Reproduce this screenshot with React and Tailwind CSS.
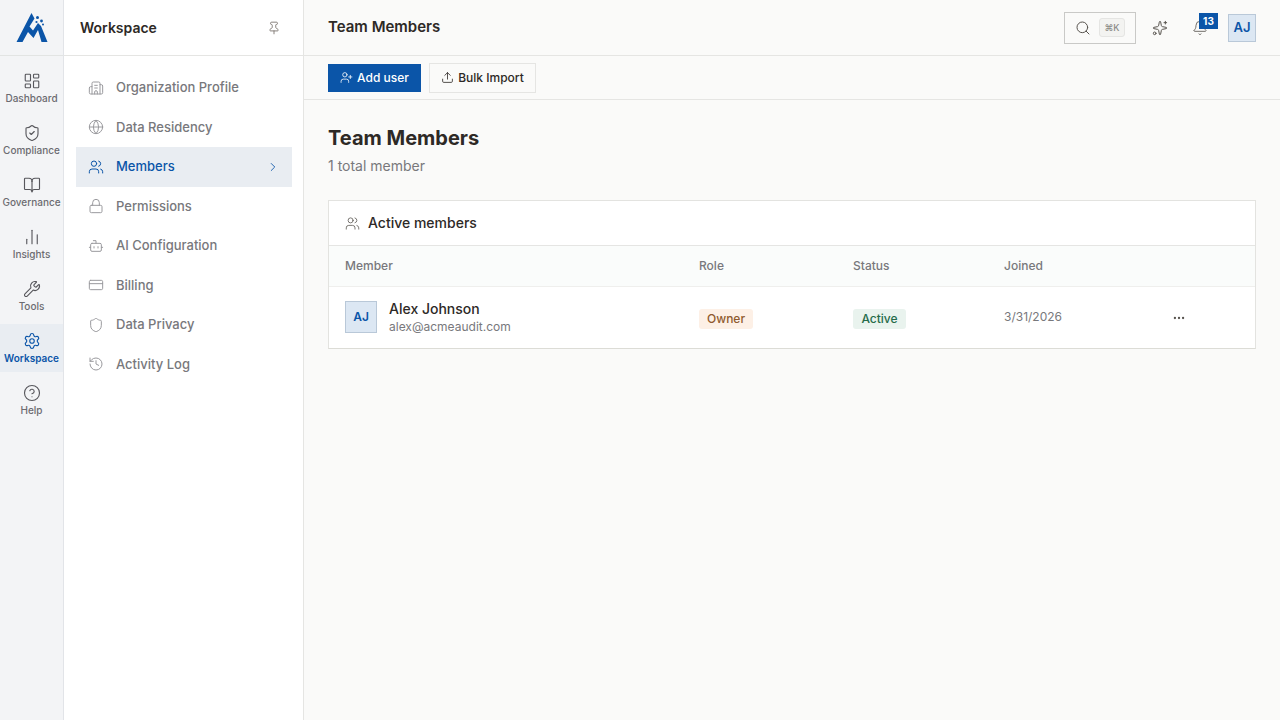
import {
  LayoutDashboard, ShieldCheck, BookOpen, ChartNoAxesColumn, Wrench, Settings, CircleHelp,
  Building2, Globe, Users, Lock, Bot, CreditCard, Shield, History, Pin, ChevronRight,
  Search, Sparkles, Bell, UserPlus, Upload, Ellipsis,
} from 'lucide-react'

const railItems = [
  { label: 'Dashboard', icon: LayoutDashboard },
  { label: 'Compliance', icon: ShieldCheck },
  { label: 'Governance', icon: BookOpen },
  { label: 'Insights', icon: ChartNoAxesColumn },
  { label: 'Tools', icon: Wrench },
  { label: 'Workspace', icon: Settings, active: true },
  { label: 'Help', icon: CircleHelp },
]

const navItems = [
  { label: 'Organization Profile', icon: Building2 },
  { label: 'Data Residency', icon: Globe },
  { label: 'Members', icon: Users, active: true },
  { label: 'Permissions', icon: Lock },
  { label: 'AI Configuration', icon: Bot },
  { label: 'Billing', icon: CreditCard },
  { label: 'Data Privacy', icon: Shield },
  { label: 'Activity Log', icon: History },
]

function Logo() {
  return (
    <svg width="32" height="32" viewBox="0 0 32 32" fill="none">
      <path d="M15.5 1 L0.5 30 H6.5 L12 20 L17.5 26 L22 18 L25.5 30 H31.5 L25 14 L22 11 L17 18.5 L13.5 14.5 L18.5 6.5 Z" fill="#0b55a8" />
      <circle cx="21.5" cy="5.5" r="1.5" fill="#0b55a8" />
      <circle cx="25.5" cy="9" r="1.4" fill="#0b55a8" />
      <circle cx="20.5" cy="10" r="1.1" fill="#0b55a8" />
      <circle cx="27" cy="12.5" r="1" fill="#0b55a8" />
    </svg>
  )
}

function Rail() {
  return (
    <div className="w-16 shrink-0 flex flex-col bg-[#f3f4f6] border-r border-[#e2e4e8]">
      <div className="h-14 flex items-center justify-center border-b border-[#e2e4e3]">
        <Logo />
      </div>
      <div className="flex flex-col gap-1 pt-2">
        {railItems.map((item) => (
          <div key={item.label} className={`h-12 pt-[1px] flex flex-col items-center justify-center ${item.active ? 'bg-[#e9edf2] text-[#0b55a8]' : 'text-[#57575c]'}`}>
            <item.icon size={18} strokeWidth={1.5} />
            <span className={`text-[10px] leading-[14px] mt-[1px] whitespace-nowrap ${item.active ? 'font-semibold' : 'font-medium text-[#6b6b70]'}`}>{item.label}</span>
          </div>
        ))}
      </div>
    </div>
  )
}

function SideNav() {
  return (
    <div className="w-60 shrink-0 flex flex-col bg-white border-r border-[#e5e5e3]">
      <div className="h-14 flex items-center justify-between pl-4 pr-[22px] border-b border-[#e5e5e3]">
        <span className="text-sm font-semibold text-[#2d2926]">Workspace</span>
        <Pin size={14} strokeWidth={1.5} className="text-[#78716c]" />
      </div>
      <div className="flex flex-col pl-3 pr-[11px] pt-3">
        {navItems.map((item) => (
          <div key={item.label} className={`h-[39.5px] flex items-center pl-3 pr-3 ${item.active ? 'bg-[#e9edf2] text-[#0b55a8]' : 'text-[#78787c]'}`}>
            <item.icon size={16} strokeWidth={1.5} className={`mr-3 ${item.active ? '' : 'text-[#9a9a9e]'}`} />
            <span className="text-[13px] font-medium flex-1">{item.label}</span>
            {item.active && <ChevronRight size={14} strokeWidth={1.5} />}
          </div>
        ))}
      </div>
    </div>
  )
}

function TopBar() {
  return (
    <div className="h-14 shrink-0 flex items-center justify-between pl-6 pr-6 border-b border-[#e5e5e3]">
      <span className="text-[15px] font-semibold text-[#2d2926]">Team Members</span>
      <div className="flex items-center">
        <div className="w-[72px] h-8 flex items-center justify-center gap-2 border border-[#c9c9c7] bg-[#fafaf9]">
          <Search size={16} strokeWidth={1.5} className="text-[#57534e]" />
          <span className="h-[19px] px-1 flex items-center rounded-[3px] bg-[#f3f3f1] border border-[#e5e5e3] text-[9px] font-medium text-[#8a8a86] leading-none">⌘K</span>
        </div>
        <Sparkles size={16} strokeWidth={1.5} className="ml-4 text-[#57534e]" />
        <div className="relative ml-6 w-4 h-4 mr-[20px]">
          <Bell size={16} strokeWidth={1.25} className="text-[#57534e]" />
          <span className="absolute -top-[7px] left-[7px] w-[19px] h-4 flex items-center justify-center bg-[#0b55a8] text-white text-[10px] font-bold leading-none">13</span>
        </div>
        <div className="w-7 h-7 flex items-center justify-center bg-[#dce7f3] border border-[#b9c8d8] text-[#0b55a8] text-[13px] font-semibold">AJ</div>
      </div>
    </div>
  )
}

function Toolbar() {
  return (
    <div className="h-11 shrink-0 flex items-center gap-2 px-6 border-b border-[#e5e5e3]">
      <button className="h-7 w-[93px] flex items-center justify-center gap-1 bg-[#0b55a8] text-white text-xs font-medium">
        <UserPlus size={13} strokeWidth={1.5} />
        Add user
      </button>
      <button className="h-[30px] w-[107px] flex items-center justify-center gap-1 bg-[#fafaf9] border border-[#e5e5e3] text-[#2d2926] text-xs font-medium">
        <Upload size={13} strokeWidth={1.5} />
        Bulk Import
      </button>
    </div>
  )
}

function MembersCard() {
  return (
    <div className="mt-6 bg-white border border-[#e3e3e0] border-b-[#dcdcd6]">
      <div className="h-[45px] flex items-center gap-2 px-4 border-b border-[#e5e5e3]">
        <Users size={15} strokeWidth={1.25} className="text-[#57534e]" />
        <span className="text-sm font-medium text-[#2d2926]">Active members</span>
      </div>
      <div className="h-[41px] grid grid-cols-[354px_154px_151px_1fr] items-center pl-4 bg-[#fafcfb] border-b border-[#efefed] text-xs font-medium text-[#78787c]">
        <span>Member</span>
        <span>Role</span>
        <span>Status</span>
        <span>Joined</span>
      </div>
      <div className="h-[61px] grid grid-cols-[354px_154px_151px_168px_1fr] items-center pl-4">
        <div className="flex items-center gap-3">
          <div className="w-8 h-8 -mt-[2px] flex items-center justify-center bg-[#dce7f3] border border-[#b9c8d8] text-[#0b55a8] text-xs font-semibold">AJ</div>
          <div className="flex flex-col">
            <span className="text-sm font-medium leading-[18px] text-[#2d2926]">Alex Johnson</span>
            <span className="text-xs leading-[17px] text-[#78787c]">alex@acmeaudit.com</span>
          </div>
        </div>
        <div className="-mt-[2px]">
          <span className="inline-flex h-5 items-center px-2 rounded-[3px] bg-[#fdf0e6] text-xs font-medium text-[#8f5a2e]">Owner</span>
        </div>
        <div className="-mt-[2px]">
          <span className="inline-flex h-5 w-[53px] justify-center items-center rounded-[3px] bg-[#e9f3ee] text-xs font-medium text-[#256b4a]">Active</span>
        </div>
        <span className="text-xs text-[#78787c] -mt-[2px]">3/31/2026</span>
        <Ellipsis size={14} className="text-[#57534e]" />
      </div>
    </div>
  )
}

export default function App() {
  return (
    <div className="w-[1280px] h-[720px] flex overflow-hidden bg-[#fafaf9] font-['Inter',sans-serif]">
      <Rail />
      <SideNav />
      <div className="flex-1 flex flex-col min-w-0">
        <TopBar />
        <Toolbar />
        <div className="px-6 pt-6">
          <h1 className="text-xl leading-7 font-bold text-[#2d2926]">Team Members</h1>
          <p className="mt-1 text-sm leading-5 text-[#78787c]">1 total member</p>
          <MembersCard />
        </div>
      </div>
    </div>
  )
}
